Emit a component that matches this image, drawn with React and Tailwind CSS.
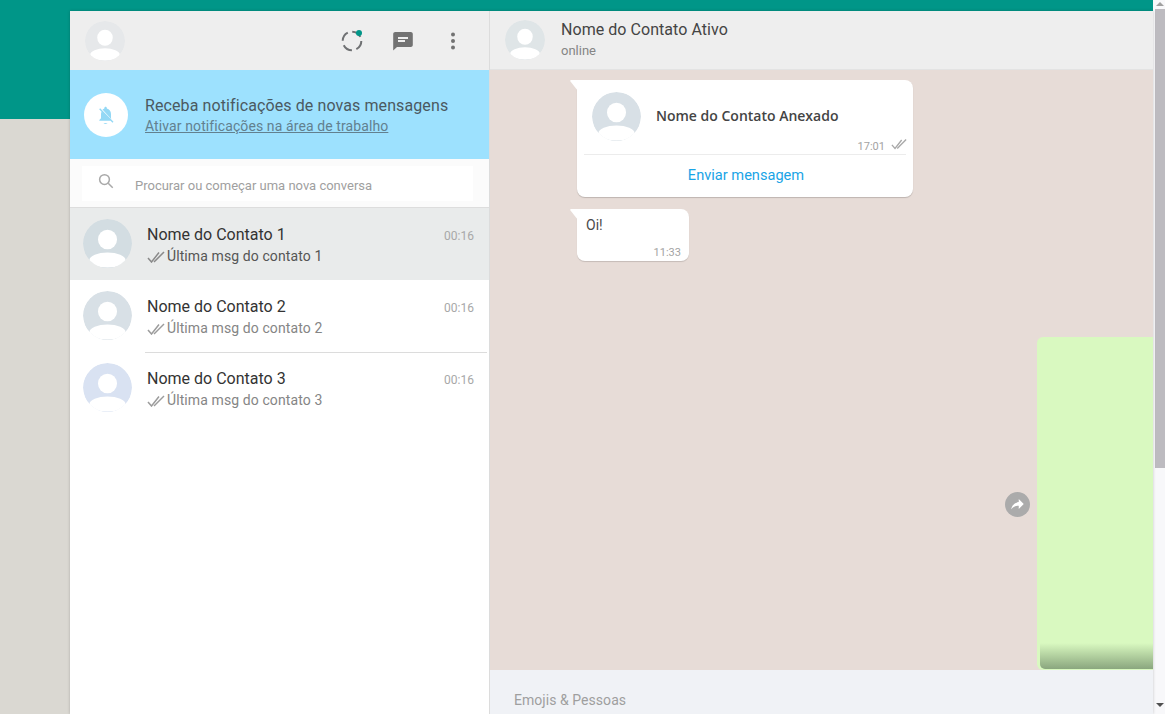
function Avatar({ size = 49, bg = "#d8e0e6", fg = "#ffffff", className = "" }) {
  return (
    <svg width={size} height={size} viewBox="0 0 49 49" className={`shrink-0 rounded-full ${className}`}>
      <circle cx="24.500" cy="24.500" r="24.500" fill={bg} />
      <ellipse cx="24.500" cy="20.500" rx="9.500" ry="9.800" fill={fg} />
      <ellipse cx="24.500" cy="41" rx="18" ry="7.500" fill={fg} />
    </svg>
  );
}

function DoubleCheck({ className = "", color = "#9c9c9c", width = 18 }) {
  return (
    <svg width={width} height="12" viewBox="0 0 18 12" fill="none" stroke={color} strokeWidth="1.500" className={className}>
      <path d="M1 7l3.500 4L12 1.500" />
      <path d="M7 11L17 1" />
    </svg>
  );
}

const contacts = [
  { id: 1, active: true, bg: "#d3dde2" },
  { id: 2 },
  { id: 3, bg: "#d9e2f2" },
];

function ContactRow({ id, active, bg }) {
  return (
    <div className={`flex h-[72px] items-start pl-[13px] ${active ? "bg-[#e9ebeb]" : "bg-white"}`}>
      <Avatar size={49} bg={bg || "#d8e0e6"} className="mt-[11px]" />
      <div className={`ml-[13px] mr-[2px] flex h-full min-w-0 flex-1 flex-col pl-[2px] ${id === 3 ? "border-t border-[#dcdcdc] pt-[15px]" : "pt-[16px]"}`}>
        <div className="flex items-baseline justify-between pr-[13px]">
          <span className="text-[16px] leading-[21px] text-[#333]">Nome do Contato {id}</span>
          <span className="text-[12px] leading-[21px] text-[#a8a8a8]">00:16</span>
        </div>
        <div className="flex h-[19px] items-center">
          <DoubleCheck color={active ? "#8a8a8a" : "#9c9c9c"} />
          <span className={`ml-[2px] text-[14px] tracking-[0.1px] ${active ? "text-[#555]" : "text-[#858585]"}`}>Última msg do contato {id}</span>
        </div>
      </div>
    </div>
  );
}

function Sidebar() {
  return (
    <div className="flex w-[420px] shrink-0 flex-col border-r border-[#dcdcdc] bg-white">
      <div className="flex h-[59px] shrink-0 items-center bg-[#eeeeee] pl-[15px] pr-[24px]">
        <Avatar size={40} bg="#e6e8ea" />
        <div className="ml-auto flex items-center gap-[27px]">
          <svg width="24" height="24" viewBox="0 0 24 24" fill="none" className="-mt-[1px]">
            <circle cx="13" cy="13" r="9.300" stroke="#6f7173" strokeWidth="2" strokeDasharray="10 4.600" />
            <circle cx="20" cy="5" r="3" fill="#009688" />
          </svg>
          <svg width="24" height="24" viewBox="0 0 24 24" fill="#727272" className="ml-[1px] -mr-[1px]">
            <path d="M19.800 3H4.300C3.100 3 2.200 3.900 2.200 5v16.500L6 18h13.800c1.100 0 2-.9 2-2V5c0-1.100-.9-2-2-2zM7 8h10v2H7V8zm7 5H7v-2h7v2z" />
          </svg>
          <svg width="24" height="24" viewBox="0 0 24 24" fill="#727272">
            <circle cx="12" cy="5.500" r="2" />
            <circle cx="12" cy="12" r="2" />
            <circle cx="12" cy="18.500" r="2" />
          </svg>
        </div>
      </div>
      <div className="flex h-[89px] shrink-0 items-center bg-[#9de1fe] pl-[14px]">
        <div className="flex h-[44px] w-[44px] items-center justify-center rounded-full bg-white">
          <svg width="20" height="20" viewBox="0 0 24 24" fill="#93d8f5">
            <path d="M9 21.500c1 1.500 3.500 1.700 5 .5L9 21.500zM18.500 17.200L7.800 5.500C8.500 4.800 9.400 4.400 10 4.200V3.500C10 2.700 10.700 2 11.500 2S13 2.700 13 3.500v.7c3 .7 5 3.400 5 6.500v5l.5 2zM5 4l-1.200 1.200L6.700 8.200c-.5 1-.7 1.800-.7 2.800v5l-2 2v1h13.500l2.300 2.300L21 20 5 4z" />
          </svg>
        </div>
        <div className="ml-[17px] mt-[2px] flex flex-col">
          <span className="text-[16px] leading-[21px] tracking-[0.1px] text-[#4b5961]">Receba notificações de novas mensagens</span>
          <a className="text-[14px] leading-[21px] tracking-[0.1px] text-[#62808f] underline">Ativar notificações na área de trabalho</a>
        </div>
      </div>
      <div className="flex h-[49px] shrink-0 items-center border-b border-[#dddddd] bg-[#fbfbfb] pl-[12px] pr-[16px]">
        <div className="flex h-[35px] flex-1 items-center bg-white pl-[15px]">
          <svg width="18" height="18" viewBox="0 0 24 24" fill="none" stroke="#a9a9a9" strokeWidth="2" className="-mt-[4px]">
            <circle cx="10" cy="10" r="6.500" />
            <path d="M15 15l6 6" />
          </svg>
          <span className="ml-[20px] mt-[6px] text-[13px] text-[#a0a0a0]">Procurar ou começar uma nova conversa</span>
        </div>
      </div>
      {contacts.map((c) => (
        <ContactRow key={c.id} {...c} />
      ))}
    </div>
  );
}

function BubbleTail() {
  return (
    <svg width="8" height="13" viewBox="0 0 8 13" className="absolute -left-[7px] top-0" fill="#fff">
      <path d="M8 0H1C0 0 0 .8.500 1.500L8 11z" />
    </svg>
  );
}

function ChatPanel() {
  return (
    <div className="flex min-w-0 flex-1 flex-col">
      <div className="flex h-[59px] shrink-0 items-center border-b border-[#e3e3e3] bg-[#eeeeee] pl-[15px]">
        <Avatar size={40} bg="#dfe5e7" />
        <div className="ml-[16px] flex flex-col">
          <span className="text-[16px] leading-[21px] tracking-[0.05px] text-[#444]">Nome do Contato Ativo</span>
          <span className="mt-[1px] text-[13px] leading-[20px] text-[#858585]">online</span>
        </div>
      </div>
      <div className="relative flex min-h-0 flex-1 flex-col items-start bg-[#e7dcd7] pl-[87px] pt-[10px]">
        <div className="relative h-[117px] w-[336px] rounded-b-[8px] rounded-tr-[8px] bg-white shadow-[0_1px_1px_rgba(0,0,0,0.18)]">
          <BubbleTail />
          <div className="mx-[7px] flex h-[75px] flex-col border-b border-[#ececec]">
            <div className="flex items-center pl-[8px] pt-[12px]">
              <Avatar size={49} bg="#d8e0e6" />
              <span className="ml-[15px] -mt-[2px] font-['Open_Sans'] text-[14px] font-semibold text-[#444]">Nome do Contato Anexado</span>
            </div>
            <div className="-mr-[1px] -mt-[1px] flex items-center justify-end gap-[6px]">
              <span className="text-[11px] leading-[14px] text-[#a3a3a3]">17:01</span>
              <DoubleCheck className="-mt-[6px]" color="#a8a8a8" width={16} />
            </div>
          </div>
          <div className="pl-[2px] pt-[9px] text-center text-[14.6px] leading-[22px] text-[#19a4e6]">Enviar mensagem</div>
        </div>
        <div className="relative mt-[12px] flex h-[52px] w-[112px] flex-col rounded-b-[8px] rounded-tr-[8px] bg-white pl-[9px] pr-[8px] pt-[6px] shadow-[0_1px_1px_rgba(0,0,0,0.15)]">
          <BubbleTail />
          <span className="text-[14px] leading-[20px] text-[#4a4a4a]">Oi!</span>
          <span className="mt-[11px] self-end text-[11px] leading-[14px] text-[#a3a3a3]">11:33</span>
        </div>
        <div className="absolute right-0 top-[267px] flex items-center">
          <div className="mr-[7px] mt-[2px] flex h-[25px] w-[25px] items-center justify-center rounded-full bg-[#ababab]">
            <svg width="15" height="15" viewBox="0 0 24 24" fill="#fff">
              <path d="M14 8V3l8 8-8 8v-5c-5.500 0-9 1.500-12 5.500C3 14 6.500 9 14 8z" />
            </svg>
          </div>
          <div className="flex h-[333px] w-[116px] items-end rounded-l-[6px] bg-[#d9f9c0] pl-[3px] pb-[1px]">
            <div className="h-[26px] w-full rounded-bl-[5px] bg-gradient-to-b from-transparent to-[#8aa67e]" />
          </div>
        </div>
      </div>
      <div className="h-[44px] shrink-0 bg-[#f0f2f6] pl-[24px] pt-[20px]">
        <span className="block text-[14px] leading-[20px] tracking-[0.05px] text-[#9f9f9f]">Emojis &amp; Pessoas</span>
      </div>
    </div>
  );
}

export default function App() {
  return (
    <div className="relative flex h-[714px] w-[1165px] overflow-hidden bg-[#dad8d2] font-['Roboto',sans-serif]">
      <div className="relative h-full min-w-0 flex-1 pl-[70px] pt-[11px]">
        <div className="absolute left-0 top-0 h-[119px] w-full bg-[#009688]" />
        <div className="relative flex h-full shadow-[0_0_3px_rgba(0,0,0,0.2)]">
          <Sidebar />
          <ChatPanel />
        </div>
      </div>
      <div className="flex w-[12px] shrink-0 flex-col bg-[#f8f8fa] pl-[2px]">
        <div className="mx-auto mt-[2px] h-0 w-0 border-x-[4px] border-b-[4px] border-x-transparent border-b-[#a0a0a0]" />
        <div className="mt-[3px] h-[459px] bg-[#bdbbc0]" />
        <div className="mx-auto mt-auto mb-[7px] h-0 w-0 border-x-[4px] border-t-[4px] border-x-transparent border-t-[#505050]" />
      </div>
    </div>
  );
}
